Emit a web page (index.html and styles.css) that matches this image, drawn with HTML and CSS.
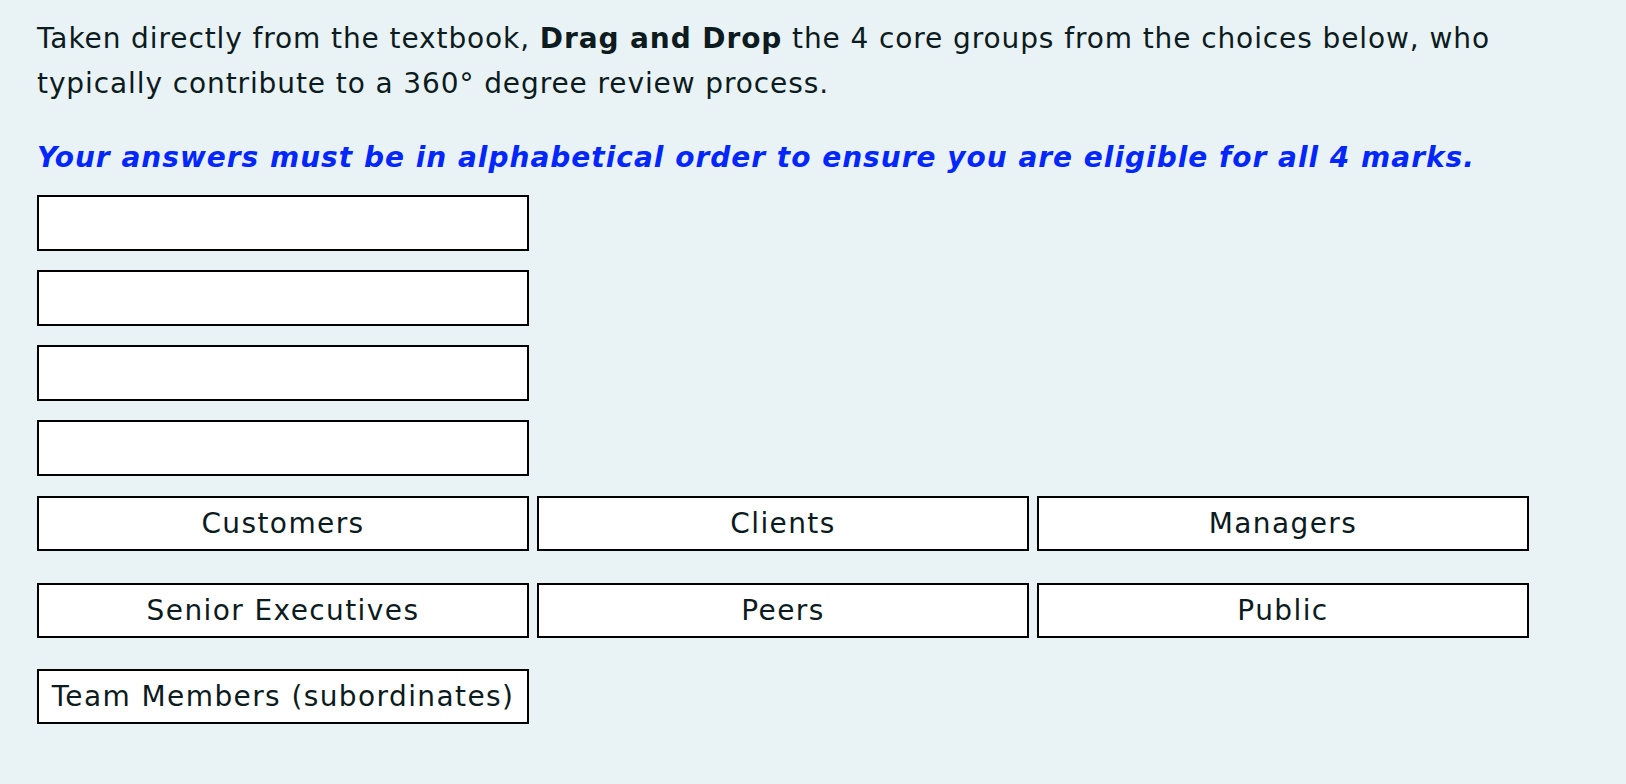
FILE: index.html
```html
<!DOCTYPE html>
<html lang="en">
<head>
    <meta charset="UTF-8">
    <meta name="viewport" content="width=device-width, initial-scale=1.0">
    <title>Drag and Drop Question</title>
    <link rel="stylesheet" href="styles.css">
</head>
<body>
    <div class="question">
        <p class="prompt">
            Taken directly from the textbook, <strong>Drag and Drop</strong> the 4 core groups from the choices below, who typically contribute to a 360° degree review process.
        </p>
        <p class="note">
            Your answers must be in alphabetical order to ensure you are eligible for all 4 marks.
        </p>

        <div class="drop-list">
            <div class="drop-zone"></div>
            <div class="drop-zone"></div>
            <div class="drop-zone"></div>
            <div class="drop-zone"></div>
        </div>

        <div class="choices">
            <div class="choice" draggable="true">Customers</div>
            <div class="choice" draggable="true">Clients</div>
            <div class="choice" draggable="true">Managers</div>
            <div class="choice" draggable="true">Senior Executives</div>
            <div class="choice" draggable="true">Peers</div>
            <div class="choice" draggable="true">Public</div>
            <div class="choice" draggable="true">Team Members (subordinates)</div>
        </div>
    </div>
</body>
</html>
```

FILE: styles.css
```css
:root {
    --background-color: #e9f2f5;
    --text-color: #0c1b20;
    --note-color: #0226ff;
    --box-border: #000000;
    --box-background: #ffffff;
}

* {
    margin: 0;
    padding: 0;
    box-sizing: border-box;
}

body {
    background-color: var(--background-color);
    color: var(--text-color);
    font-family: "DejaVu Sans", "Open Sans", sans-serif;
    min-height: 100vh;
}

.question {
    padding: 17px 37px 40px;
}

.prompt {
    font-size: 28px;
    line-height: 44.7px;
    letter-spacing: 0.9px;
}

.prompt strong {
    font-weight: 600;
}

.note {
    margin-top: 30px;
    font-size: 28px;
    line-height: 44.7px;
    font-style: italic;
    font-weight: 600;
    letter-spacing: 1px;
    color: var(--note-color);
}

.drop-list {
    margin-top: 14px;
    display: flex;
    flex-direction: column;
    gap: 19px;
}

.drop-zone {
    width: 492px;
    height: 56px;
    background-color: var(--box-background);
    border: 2px solid var(--box-border);
}

.choices {
    margin-top: 20px;
    display: grid;
    grid-template-columns: repeat(3, 492px);
    column-gap: 8px;
    row-gap: 31.5px;
}

.choice {
    height: 55px;
    display: flex;
    align-items: center;
    justify-content: center;
    background-color: var(--box-background);
    border: 2px solid var(--box-border);
    font-size: 28px;
    letter-spacing: 1.4px;
    white-space: nowrap;
    cursor: grab;
}
```
